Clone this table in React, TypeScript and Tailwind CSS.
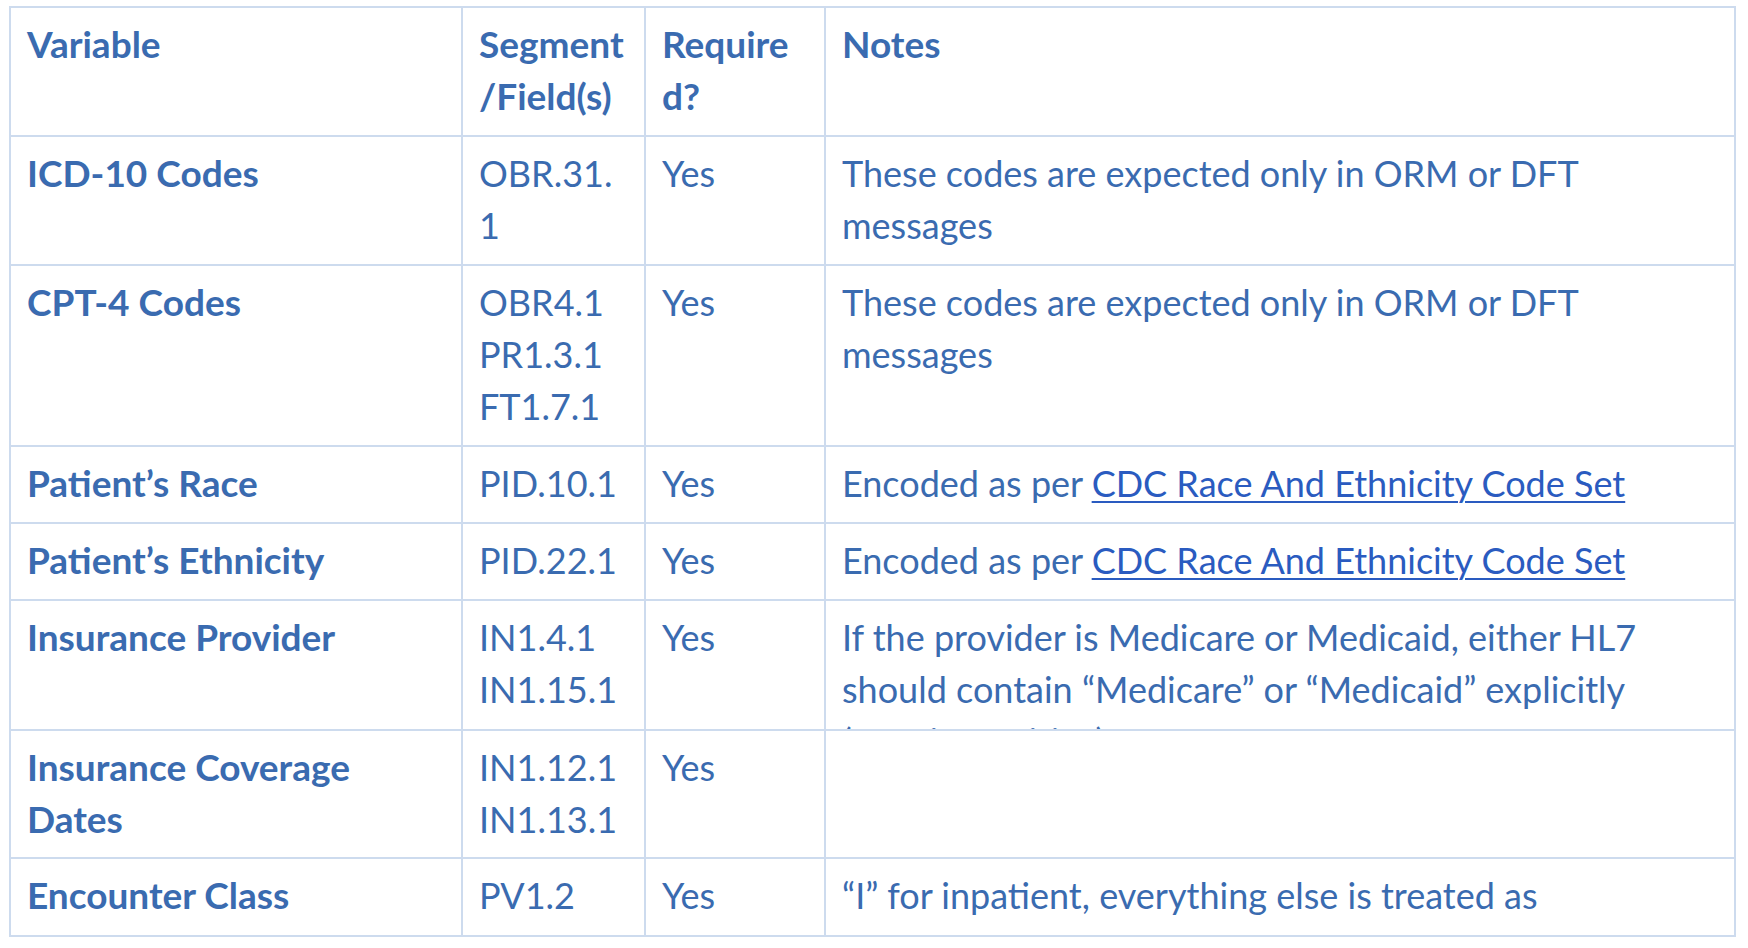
const ROWS = [
  { h: "h-[129px]", cells: [["Variable"], ["Segment", "/Field(s)"], ["Require", "d?"], ["Notes"]], head: true },
  {
    h: "h-[129px]",
    cells: [["ICD-10 Codes"], ["OBR.31.", "1"], ["Yes"], ["These codes are expected only in ORM or DFT", "messages"]],
  },
  {
    h: "h-[181px]",
    cells: [["CPT-4 Codes"], ["OBR4.1", "PR1.3.1", "FT1.7.1"], ["Yes"], ["These codes are expected only in ORM or DFT", "messages"]],
  },
  { h: "h-[77px]", cells: [["Patient’s Race"], ["PID.10.1"], ["Yes"], ["link"]] },
  { h: "h-[77px]", cells: [["Patient’s Ethnicity"], ["PID.22.1"], ["Yes"], ["link"]] },
  {
    h: "h-[130px]",
    cells: [
      ["Insurance Provider"],
      ["IN1.4.1", "IN1.15.1"],
      ["Yes"],
      [
        "If the provider is Medicare or Medicaid, either HL7",
        "should contain “Medicare” or “Medicaid” explicitly",
        "(case insensitive)",
      ],
    ],
  },
  { h: "h-[128px]", cells: [["Insurance Coverage", "Dates"], ["IN1.12.1", "IN1.13.1"], ["Yes"], [""]] },
  {
    h: "h-[78px]",
    cells: [["Encounter Class"], ["PV1.2"], ["Yes"], ["“I” for inpatient, everything else is treated as"]],
  },
];

const WIDTHS = ["w-[452px]", "w-[183px]", "w-[180px]", "w-[910px]"];

function Lines({ lines }: { lines: string[] }) {
  if (lines[0] === "link") {
    return (
      <div className="whitespace-nowrap">
        Encoded as per{" "}
        <span className="text-[#2a5bc0] underline decoration-2 underline-offset-[4px]">
          CDC Race And Ethnicity Code Set
        </span>
      </div>
    );
  }
  return (
    <>
      {lines.map((l, i) => (
        <div key={i} className="whitespace-nowrap">
          {l || "\u00a0"}
        </div>
      ))}
    </>
  );
}

export default function App() {
  return (
    <div className="min-h-screen w-full bg-white pl-[9px] pt-[6px] font-['Lato',sans-serif] leading-[52px] text-[#3a6bb0]">
      <div className="flex w-fit flex-col border-l-2 border-t-2 border-[#cddbee]">
        {ROWS.map((row, r) => (
          <div key={r} className={`flex ${row.h}`}>
            {row.cells.map((c, i) => (
              <div
                key={i}
                className={`${WIDTHS[i]} h-full overflow-hidden border-b-2 border-r-2 border-[#cddbee] pl-[16px] pt-[10px] ${
                  row.head || i === 0 ? "text-[37px] font-bold" : "text-[36px]"
                }`}
              >
                <Lines lines={c} />
              </div>
            ))}
          </div>
        ))}
      </div>
    </div>
  );
}
